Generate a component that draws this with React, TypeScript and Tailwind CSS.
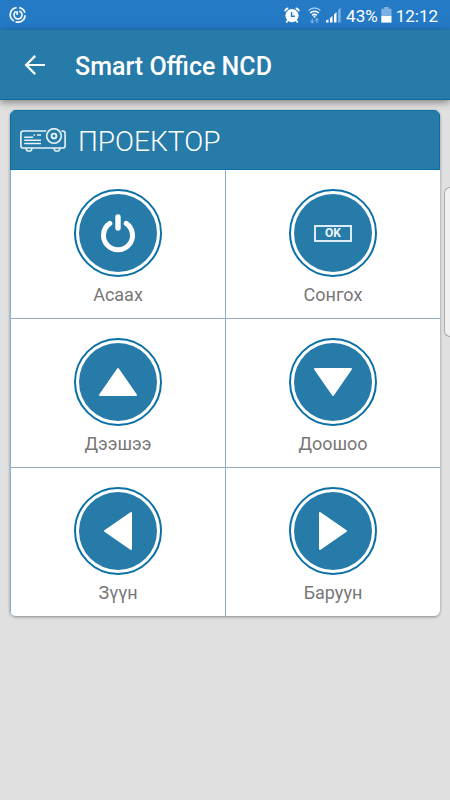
import type { ReactNode } from "react";

function SyncIcon() {
  return (
    <svg width="18" height="18" viewBox="0 0 18 18" fill="none" stroke="#f2f7fc" strokeWidth="1.7" aria-hidden="true">
      <path d="M7.6 1.6A7.1 7.1 0 0 0 5 14.9M10.2 1.6a7.1 7.1 0 0 1 5.7 5.2M16.1 9.2a7.1 7.1 0 0 1-9.6 6.5" />
      <path d="M10.2 5.1a4 4 0 1 1-4.5 1.6M5 6h3.2v3" />
    </svg>
  );
}

function AlarmIcon() {
  return (
    <svg width="16" height="17" viewBox="0 0 16 17" fill="none" aria-hidden="true">
      <circle cx="8" cy="8.6" r="6.6" fill="#fff" />
      <path d="M1.1 4.4A3 3 0 0 1 4.3 1.5M14.9 4.4a3 3 0 0 0-3.2-2.9" stroke="#fff" strokeWidth="1.8" />
      <path d="M3.8 13.5l-1.5 2M12.2 13.5l1.5 2" stroke="#fff" strokeWidth="1.7" />
      <path d="M7.6 5v4.3h3.3" stroke="#257ac6" strokeWidth="1.4" />
    </svg>
  );
}

function WifiIcon() {
  return (
    <svg width="13" height="17" viewBox="0 0 13 17" fill="none" aria-hidden="true">
      <path d="M.6 3.5a8.5 8.5 0 0 1 11.8 0" stroke="#9fc5ea" strokeWidth="1.5" />
      <path d="M2.2 6a6.2 6.2 0 0 1 8.6 0M4.2 8.3a3.4 3.4 0 0 1 4.6 0" stroke="#fff" strokeWidth="1.6" />
      <circle cx="6.5" cy="9.6" r="1.1" fill="#fff" />
      <path d="M4.2 11.4v4.4M2.5 14l1.7 1.9L5.9 14M8.8 16v-4.4M7.1 13.4l1.7-1.9 1.7 1.9" stroke="#79b0e4" strokeWidth="1.1" />
    </svg>
  );
}

function SignalIcon() {
  return (
    <svg width="15" height="16" viewBox="0 0 15 16" aria-hidden="true">
      <path d="M0 13.5L2.5 12.5V15.5H0zM4 11l2.5-2v6.5H4zM8 7.5L10.5 5v10.5H8z" fill="#fff" />
      <path d="M12 3l2.7-2.5v15H12z" fill="#7db1e3" />
    </svg>
  );
}

function BatteryIcon() {
  return (
    <svg width="11" height="16" viewBox="0 0 11 16" aria-hidden="true">
      <path d="M3.2 0h4.6v1.8h2.7V9H.3V1.8h2.9z" fill="#7db1e3" />
      <path d="M.3 9h10.2v6.6H.3z" fill="#fff" />
    </svg>
  );
}

function BackIcon() {
  return (
    <svg width="22" height="20" viewBox="0 0 22 20" fill="none" stroke="#fff" strokeWidth="2.2" aria-hidden="true">
      <path d="M11.2 .9L2.1 10l9.1 9.1M2.3 10H21" />
    </svg>
  );
}

function ProjectorIcon() {
  return (
    <svg width="46" height="24" viewBox="0 0 46 24" fill="none" stroke="#e9f4fa" strokeWidth="1.6" aria-hidden="true">
      <path d="M26.3 3H3.2Q.9 3 .9 5.3v12.4Q.9 20 3.2 20h39.6q2.3 0 2.3-2.3V5.3Q45.1 3 42.8 3h-1.4" />
      <circle cx="34" cy="8" r="7.3" />
      <circle cx="34" cy="8" r="2.4" strokeWidth="1.9" />
      <path d="M4.2 9.2h9M4.2 12.2H21M4.2 15.5H21M13.5 7h1.6M17 7h4" />
      <path d="M6 20.2q.4 2.8 1.8 2.8h2.4q1.4 0 1.8-2.8M34 20.2q.4 2.8 1.8 2.8h2.4q1.4 0 1.8-2.8" />
    </svg>
  );
}

function PowerIcon() {
  return (
    <svg width="80" height="80" viewBox="-40 -40 80 80" className="shrink-0" fill="none" stroke="#fff" strokeLinecap="round" aria-hidden="true">
      <path d="M-8.2-9.6A14.5 14.5 0 1 0 8.2-9.6" strokeWidth="5" />
      <path d="M0-16V-5" strokeWidth="5.4" />
    </svg>
  );
}

function TriangleIcon({ points }: { points: string }) {
  return (
    <svg width="80" height="80" viewBox="-40 -40 80 80" className="shrink-0" fill="#fff" stroke="#fff" strokeWidth="2" strokeLinejoin="round" aria-hidden="true">
      <polygon points={points} />
    </svg>
  );
}

const controls: { label: string; icon: ReactNode }[] = [
  { label: "Асаах", icon: <PowerIcon /> },
  {
    label: "Сонгох",
    icon: (
      <span className="flex h-[17px] w-[38px] items-center justify-center border-2 border-[#dcecf5] text-xs leading-3 font-bold text-[#eef7fc]">
        OK
      </span>
    ),
  },
  { label: "Дээшээ", icon: <TriangleIcon points="0,-13 18,13 -18,13" /> },
  { label: "Доошоо", icon: <TriangleIcon points="0,13 18,-13 -18,-13" /> },
  { label: "Зүүн", icon: <TriangleIcon points="-13,0 13,18 13,-18" /> },
  { label: "Баруун", icon: <TriangleIcon points="13,0 -13,18 -13,-18" /> },
];

export default function App() {
  return (
    <div className="relative min-h-screen bg-[#e0e0e0] font-['Roboto','Noto_Sans',sans-serif]">
      <div className="flex h-[30px] items-center bg-[#257ac6] pr-3 pl-[9px] text-white">
        <SyncIcon />
        <div className="ml-auto flex items-center">
          <AlarmIcon />
          <span className="ml-2 flex items-center gap-[5px]">
            <WifiIcon />
            <SignalIcon />
          </span>
          <span className="ml-[5px] pt-0.5 text-[17px] leading-5">43%</span>
          <span className="ml-[3px]">
            <BatteryIcon />
          </span>
          <span className="ml-1 pt-0.5 text-[17px] leading-5">12:12</span>
        </div>
      </div>

      <header className="flex h-[70px] items-center border-b border-[#0a6c9f] bg-[#277ba9] pl-6 shadow-[0_2px_8px_rgba(0,0,0,0.45)]">
        <button type="button" aria-label="Back" className="flex">
          <BackIcon />
        </button>
        <h1 className="ml-[29px] pt-1 text-[25px] leading-8 font-medium text-white">Smart Office NCD</h1>
      </header>

      <main className="p-2.5">
        <section className="overflow-hidden rounded-md bg-white shadow-[0_1px_3px_rgba(0,0,0,0.4)]">
          <div className="flex h-[60px] items-center gap-3 border border-[#0a6fa3] bg-[#277ba9] pl-[9px] text-white">
            <ProjectorIcon />
            <h2 className="pt-1 text-[28px] leading-9 font-light">ПРОЕКТОР</h2>
          </div>
          <div className="grid grid-cols-2 gap-px border-l border-[#85b3d3] bg-[#94aac4]">
            {controls.map((c) => (
              <button
                key={c.label}
                type="button"
                className="flex flex-col items-center bg-white pt-[19px] pb-[11px] text-[18px] leading-6 text-[#777777]"
              >
                <span className="flex size-[88px] items-center justify-center rounded-full border-2 border-[#0a70a6] bg-white p-[3px]">
                  <span className="flex size-full items-center justify-center overflow-hidden rounded-full bg-[#277ba9]">
                    {c.icon}
                  </span>
                </span>
                <span className="mt-1.5">{c.label}</span>
              </button>
            ))}
          </div>
        </section>
      </main>

      <div className="absolute top-[187px] right-0 h-[150px] w-1.5 rounded-l-md border border-r-0 border-[#a9a9a9] bg-[#f1f1f1]" />
    </div>
  );
}
